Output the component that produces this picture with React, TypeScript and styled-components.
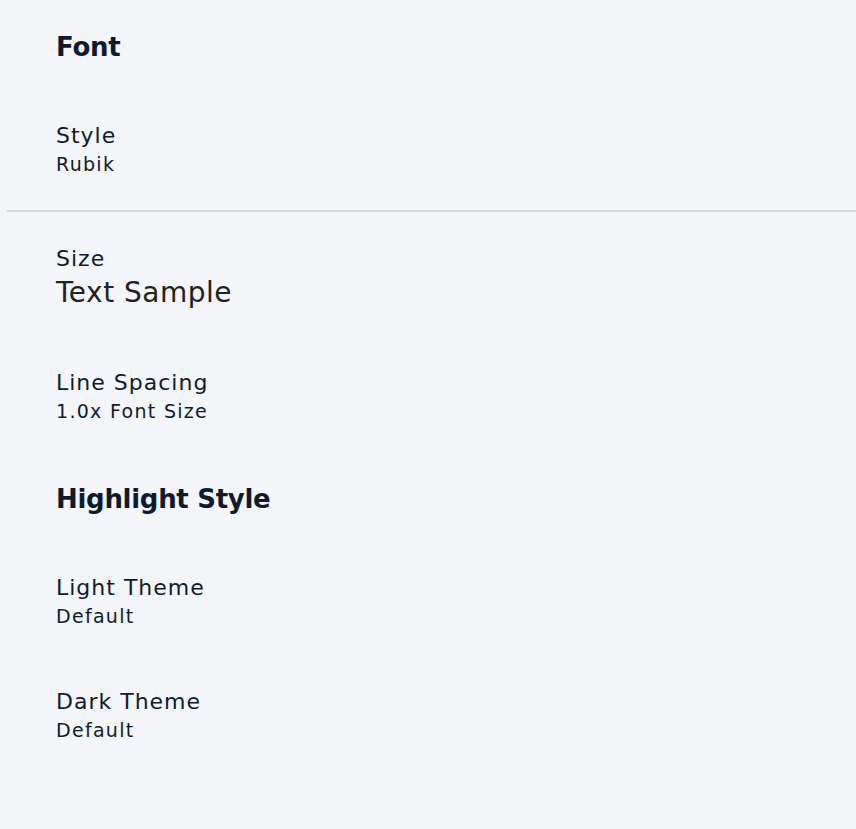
import React from "react";
import styled, { createGlobalStyle } from "styled-components";

const Global = createGlobalStyle`
  html, body { margin: 0; padding: 0; background: #f3f5f8; }
  body { font-family: "DejaVu Sans", "Noto Sans", sans-serif; color: #0f1b2d; }
`;

const Page = styled.div`
  display: flex;
  flex-direction: column;
  padding-top: 2px;
  min-height: 829px;
  box-sizing: border-box;
`;

const SectionTitle = styled.h2`
  margin: 0;
  padding: 28px 0 29px 56px;
  font-size: 26px;
  line-height: 34px;
  font-weight: 700;
  letter-spacing: -0.3px;
  color: #0f1b2d;
`;

const Item = styled.div`
  display: flex;
  flex-direction: column;
  padding: 28px 0 28px 56px;
`;

const ItemTitle = styled.div`
  font-size: 22px;
  line-height: 29px;
  letter-spacing: 1px;
  color: #0f1b2d;
`;

const ItemValue = styled.div<{ $sample?: boolean }>`
  font-size: ${(p) => (p.$sample ? "28px" : "19px")};
  line-height: ${(p) => (p.$sample ? "39px" : "29px")};
  letter-spacing: ${(p) => (p.$sample ? "0.5px" : "1.3px")};
  color: ${(p) => (p.$sample ? "#222222" : "#0f1b2d")};
`;

const Divider = styled.hr`
  margin: 3px 0 4px 7px;
  border: none;
  height: 2px;
  background: #d6d9dd;
`;

export default function App() {
  return (
    <>
      <Global />
      <Page>
        <SectionTitle>Font</SectionTitle>
        <Item>
          <ItemTitle>Style</ItemTitle>
          <ItemValue>Rubik</ItemValue>
        </Item>
        <Divider />
        <Item>
          <ItemTitle>Size</ItemTitle>
          <ItemValue $sample>Text Sample</ItemValue>
        </Item>
        <Item>
          <ItemTitle>Line Spacing</ItemTitle>
          <ItemValue>1.0x Font Size</ItemValue>
        </Item>
        <SectionTitle>Highlight Style</SectionTitle>
        <Item>
          <ItemTitle>Light Theme</ItemTitle>
          <ItemValue>Default</ItemValue>
        </Item>
        <Item>
          <ItemTitle>Dark Theme</ItemTitle>
          <ItemValue>Default</ItemValue>
        </Item>
      </Page>
    </>
  );
}
